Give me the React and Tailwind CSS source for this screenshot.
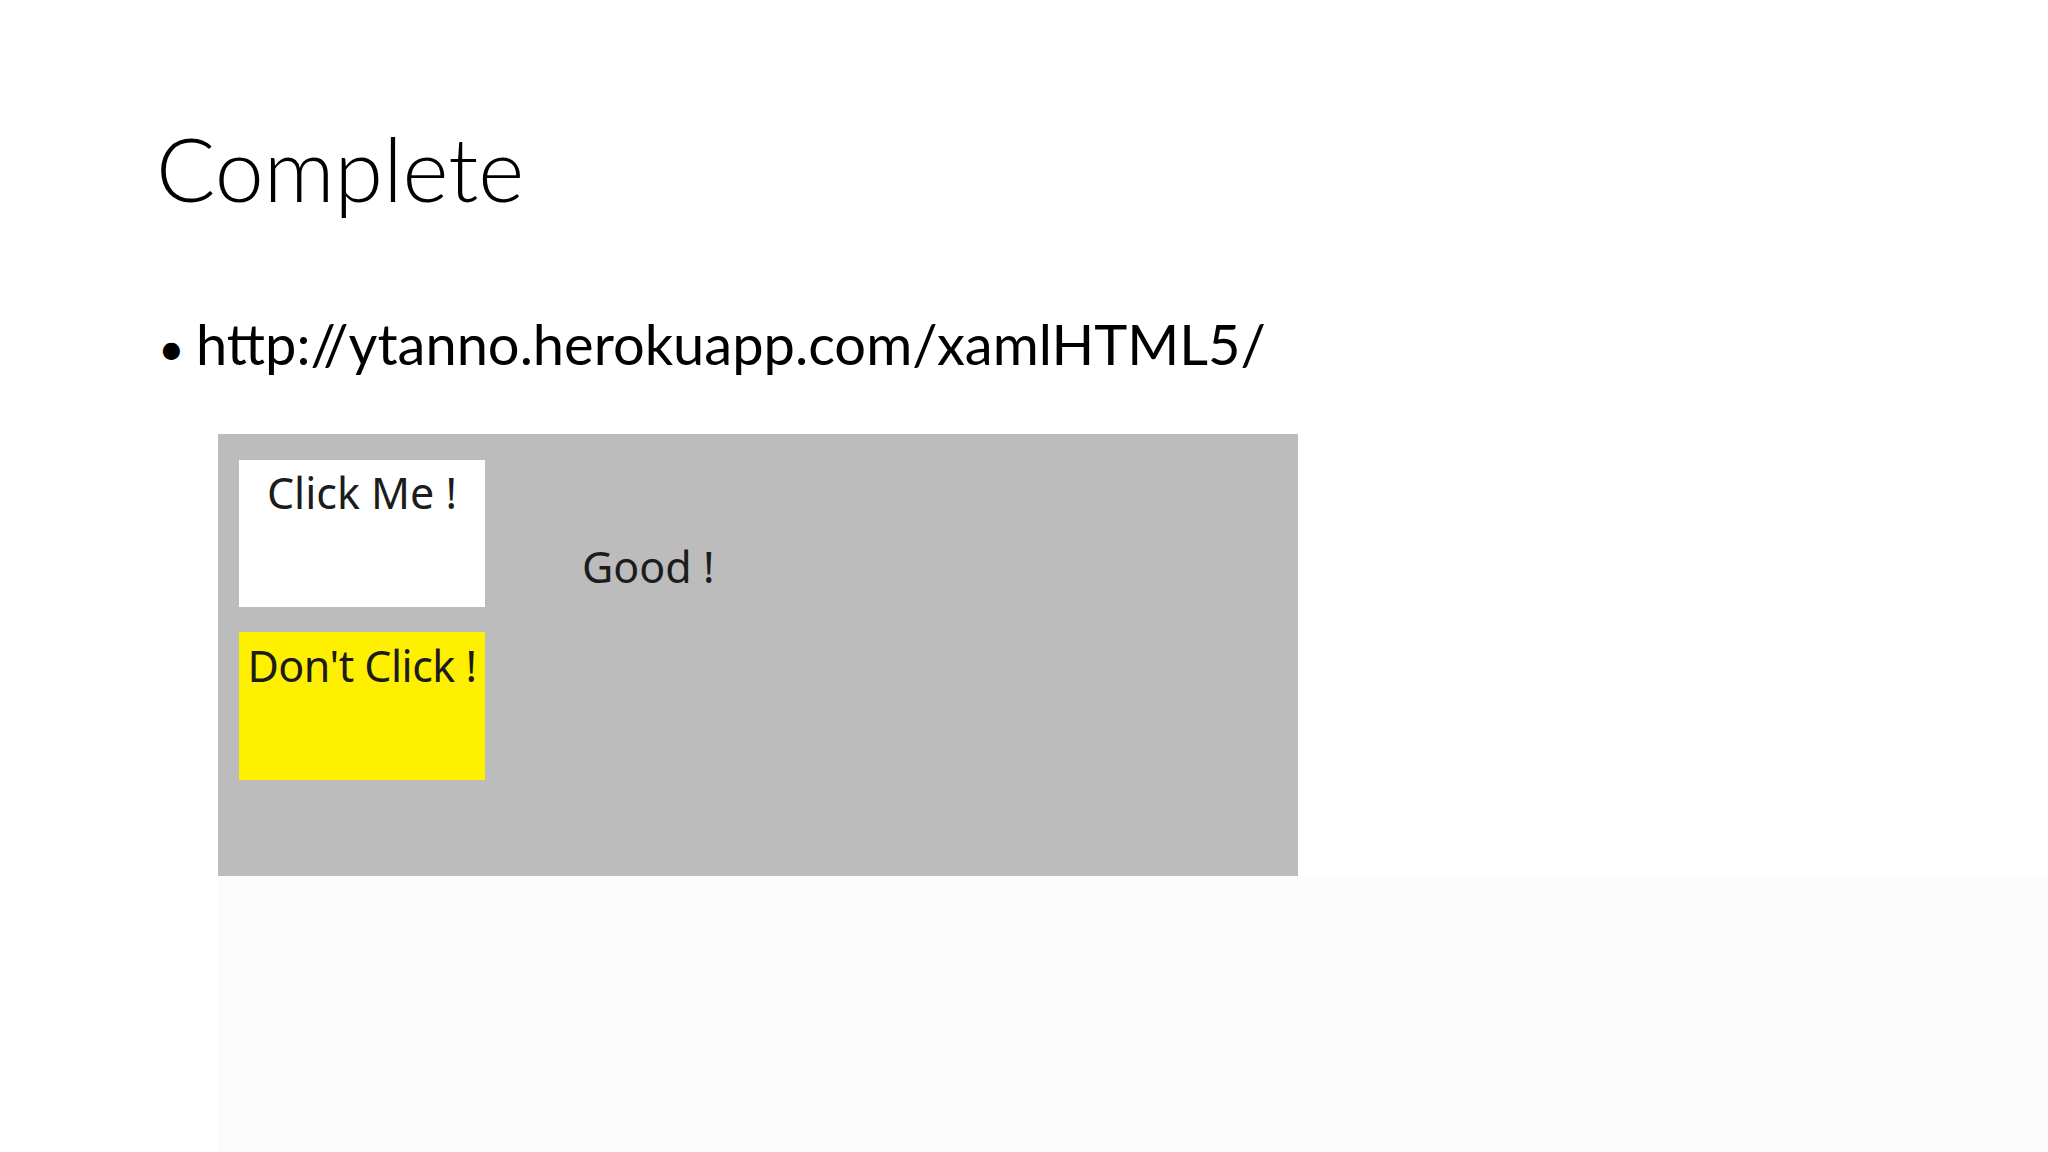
export default function App() {
  return (
    <div className="w-[2048px] h-[1152px] bg-white overflow-hidden flex flex-col">
      {/* slide header */}
      <h1 className="ml-[156px] mt-[124px] text-[88px] leading-none font-light text-black font-['Lato','Liberation_Sans',sans-serif]">
        Complete
      </h1>

      {/* bullet */}
      <div className="ml-[158px] mt-[104px] flex items-baseline text-[56px] leading-none text-black font-['Lato','Liberation_Sans',sans-serif]">
        <span className="w-[38px] text-[46px]">•</span>
        <span>http://ytanno.herokuapp.com/xamlHTML5/</span>
      </div>

      {/* screenshot of the demo page */}
      <div className="ml-[218px] mt-[62px] flex-1 flex flex-col">
        <div className="w-[1080px] h-[442px] bg-[#bcbcbc] pt-[26px] pl-[21px] flex items-start font-['Noto_Sans','Open_Sans',sans-serif] text-[#1c1c1c]">
          <div className="flex flex-col gap-[25px]">
            <div className="w-[246px] h-[147px] bg-white pt-[11px] text-center text-[43px] leading-none whitespace-nowrap">
              Click Me !
            </div>
            <div className="w-[246px] h-[148px] bg-[#fff000] pt-[12px] text-center text-[43px] leading-none whitespace-nowrap tracking-[-0.5px]">
              Don't Click !
            </div>
          </div>
          <div className="ml-[97px] mt-[85px] text-[43px] leading-none">Good !</div>
        </div>
        <div className="flex-1 bg-[#fcfcfc]" />
      </div>
    </div>
  );
}
